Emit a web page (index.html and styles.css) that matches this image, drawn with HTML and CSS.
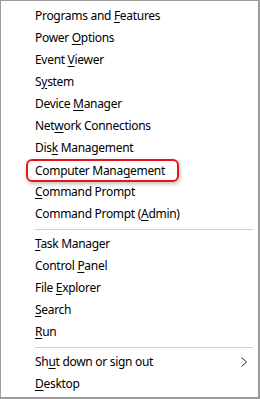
FILE: index.html
```html
<!DOCTYPE html>
<html lang="en">
<head>
  <meta charset="UTF-8" />
  <meta name="viewport" content="width=device-width, initial-scale=1.0"/>
  <title>Quick Link Menu</title>
  <link rel="stylesheet" href="styles.css">
</head>
<body>

  <div class="menu">
    <ul class="menu-group">
      <li class="menu-item">Programs and <u>F</u>eatures</li>
      <li class="menu-item">Power <u>O</u>ptions</li>
      <li class="menu-item">Event <u>V</u>iewer</li>
      <li class="menu-item">S<u>y</u>stem</li>
      <li class="menu-item">Device <u>M</u>anager</li>
      <li class="menu-item">Net<u>w</u>ork Connections</li>
      <li class="menu-item">Dis<u>k</u> Management</li>
      <li class="menu-item"><span class="highlight">Computer Mana<u>g</u>ement</span></li>
      <li class="menu-item"><u>C</u>ommand Prompt</li>
      <li class="menu-item">Command Prompt (<u>A</u>dmin)</li>
    </ul>

    <div class="separator"></div>

    <ul class="menu-group">
      <li class="menu-item"><u>T</u>ask Manager</li>
      <li class="menu-item">Control <u>P</u>anel</li>
      <li class="menu-item">File <u>E</u>xplorer</li>
      <li class="menu-item"><u>S</u>earch</li>
      <li class="menu-item"><u>R</u>un</li>
    </ul>

    <div class="separator"></div>

    <ul class="menu-group">
      <li class="menu-item has-sub">
        <span>Sh<u>u</u>t down or sign out</span>
        <svg class="chevron" width="8" height="12" viewBox="0 0 8 12">
          <polyline points="1.5,1.5 6.5,6 1.5,10.5" fill="none" stroke="#222" stroke-width="1"/>
        </svg>
      </li>
      <li class="menu-item"><u>D</u>esktop</li>
    </ul>
  </div>

</body>
</html>
```

FILE: styles.css
```css
:root {
  --border: #9c9c9c;
  --text: #000000;
  --line: #cfcfcf;
  --red: #e8141e;
}

* {
  box-sizing: border-box;
  margin: 0;
  padding: 0;
}

body {
  font-family: "Noto Sans", "Open Sans", sans-serif;
  font-size: 12px;
  letter-spacing: -0.3px;
  color: var(--text);
  background: #ffffff;
}

.menu {
  width: 260px;
  height: 399px;
  background: #ffffff;
  border-style: solid;
  border-color: var(--border);
  border-width: 1px 2px 2px 1px;
  padding-top: 4px;
}

.menu-group {
  list-style: none;
}

.menu-item {
  height: 22px;
  line-height: 22px;
  padding-left: 34px;
  padding-right: 10px;
  white-space: nowrap;
}

.menu-item u {
  text-decoration-thickness: 1px;
  text-underline-offset: 2px;
}

.has-sub {
  display: flex;
  justify-content: space-between;
  align-items: center;
}

.chevron {
  display: block;
}

.highlight {
  display: inline-block;
  margin-left: -9px;
  padding: 0 12px 0 7px;
  line-height: 19px;
  border: 2px solid var(--red);
  border-radius: 6px;
  box-shadow: 1px 2px 4px rgba(0, 0, 0, 0.25);
}

.separator {
  height: 1px;
  margin: 4px 5px 3px 34px;
  background: var(--line);
}
```
